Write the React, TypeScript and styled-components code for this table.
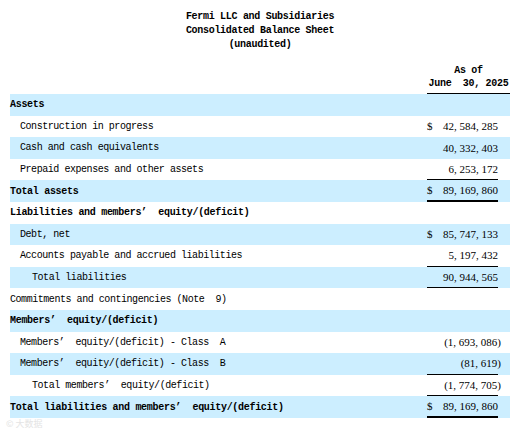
import React from "react";
import styled, { createGlobalStyle } from "styled-components";

type Line = {
  label: string;
  indent?: number;
  bold?: boolean;
  shaded?: boolean;
  dollar?: boolean;
  value?: string;
  negative?: boolean;
  rule?: "single" | "double";
};

const lines: Line[] = [
  { label: "Assets", bold: true, shaded: true },
  { label: "Construction in progress", indent: 1, dollar: true, value: "42, 584, 285" },
  { label: "Cash and cash equivalents", indent: 1, shaded: true, value: "40, 332, 403" },
  { label: "Prepaid expenses and other assets", indent: 1, value: "6, 253, 172", rule: "single" },
  { label: "Total assets", bold: true, shaded: true, dollar: true, value: "89, 169, 860", rule: "double" },
  { label: "Liabilities and members’  equity/(deficit)", bold: true },
  { label: "Debt, net", indent: 1, shaded: true, dollar: true, value: "85, 747, 133" },
  { label: "Accounts payable and accrued liabilities", indent: 1, value: "5, 197, 432", rule: "single" },
  { label: "Total liabilities", indent: 2, shaded: true, value: "90, 944, 565", rule: "single" },
  { label: "Commitments and contingencies (Note  9)" },
  { label: "Members’  equity/(deficit)", bold: true, shaded: true },
  { label: "Members’  equity/(deficit) - Class  A", indent: 1, value: "1, 693, 086", negative: true },
  { label: "Members’  equity/(deficit) - Class  B", indent: 1, shaded: true, value: "81, 619", negative: true, rule: "single" },
  { label: "Total members’  equity/(deficit)", indent: 2, value: "1, 774, 705", negative: true, rule: "single" },
  { label: "Total liabilities and members’  equity/(deficit)", bold: true, shaded: true, dollar: true, value: "89, 169, 860", rule: "double" },
];

const GlobalStyle = createGlobalStyle`
  body {
    margin: 0;
    background: #ffffff;
    color: #000000;
  }
`;

const Page = styled.div`
  width: 514px;
  padding: 10px 4px 0 10px;
  box-sizing: border-box;
  font-family: "Liberation Mono", "DejaVu Sans Mono", monospace;
`;

const Heading = styled.div`
  text-align: center;
  font-size: 10px;
  font-weight: bold;
  letter-spacing: -0.3px;
  line-height: 14px;
  margin-bottom: 12px;
`;

const ColumnHead = styled.div`
  display: flex;
  justify-content: flex-end;
`;

const DateCell = styled.div`
  width: 83px;
  text-align: center;
  font-size: 10px;
  font-weight: bold;
  letter-spacing: -0.3px;
  line-height: 13px;
  white-space: pre;
  padding-bottom: 3px;
  border-bottom: 1px solid #000;
`;

const Row = styled.div<{ $shaded?: boolean }>`
  display: grid;
  grid-template-columns: 1fr 83px;
  height: 21.6px;
  background: ${(p) => (p.$shaded ? "#cceeff" : "transparent")};
`;

const Label = styled.div<{ $indent: number; $bold?: boolean }>`
  display: flex;
  align-items: center;
  padding-left: ${(p) => [0, 10, 22][p.$indent]}px;
  font-size: 10px;
  font-weight: ${(p) => (p.$bold ? "bold" : "normal")};
  letter-spacing: ${(p) => (p.$bold ? "-0.3px" : "-0.45px")};
  white-space: pre;
`;

const ValueCell = styled.div`
  padding-right: 12px;
  display: flex;
`;

const Amount = styled.div<{ $rule?: "single" | "double" }>`
  flex: 1;
  display: flex;
  align-items: center;
  justify-content: space-between;
  box-sizing: border-box;
  border-bottom: ${(p) =>
    p.$rule === "double" ? "2px solid #000" : p.$rule === "single" ? "1px solid #000" : "none"};
  font-family: "Liberation Serif", "Times New Roman", serif;
  font-size: 11px;
  white-space: pre;
`;

const Figure = styled.span`
  margin-left: auto;
`;

const Paren = styled.span`
  margin-right: -3px;
`;

const Watermark = styled.div`
  margin-left: -4px;
  font-family: "Noto Sans CJK SC", sans-serif;
  font-size: 9px;
  line-height: 11px;
  color: #e4e4e4;
`;

export default function App() {
  return (
    <>
      <GlobalStyle />
      <Page>
        <Heading>
          <div>Fermi LLC and Subsidiaries</div>
          <div>Consolidated Balance Sheet</div>
          <div>(unaudited)</div>
        </Heading>
        <ColumnHead>
          <DateCell>
            <div>As of</div>
            <div>{"June  30, 2025"}</div>
          </DateCell>
        </ColumnHead>
        {lines.map((l, i) => (
          <Row key={i} $shaded={l.shaded}>
            <Label $indent={l.indent ?? 0} $bold={l.bold}>
              {l.label}
            </Label>
            <ValueCell>
              {l.value && (
                <Amount $rule={l.rule}>
                  {l.dollar && <span>$</span>}
                  {l.negative ? (
                    <Figure>
                      ({l.value}
                      <Paren>)</Paren>
                    </Figure>
                  ) : (
                    <Figure>{l.value}</Figure>
                  )}
                </Amount>
              )}
            </ValueCell>
          </Row>
        ))}
        <Watermark>© 大数据</Watermark>
      </Page>
    </>
  );
}
